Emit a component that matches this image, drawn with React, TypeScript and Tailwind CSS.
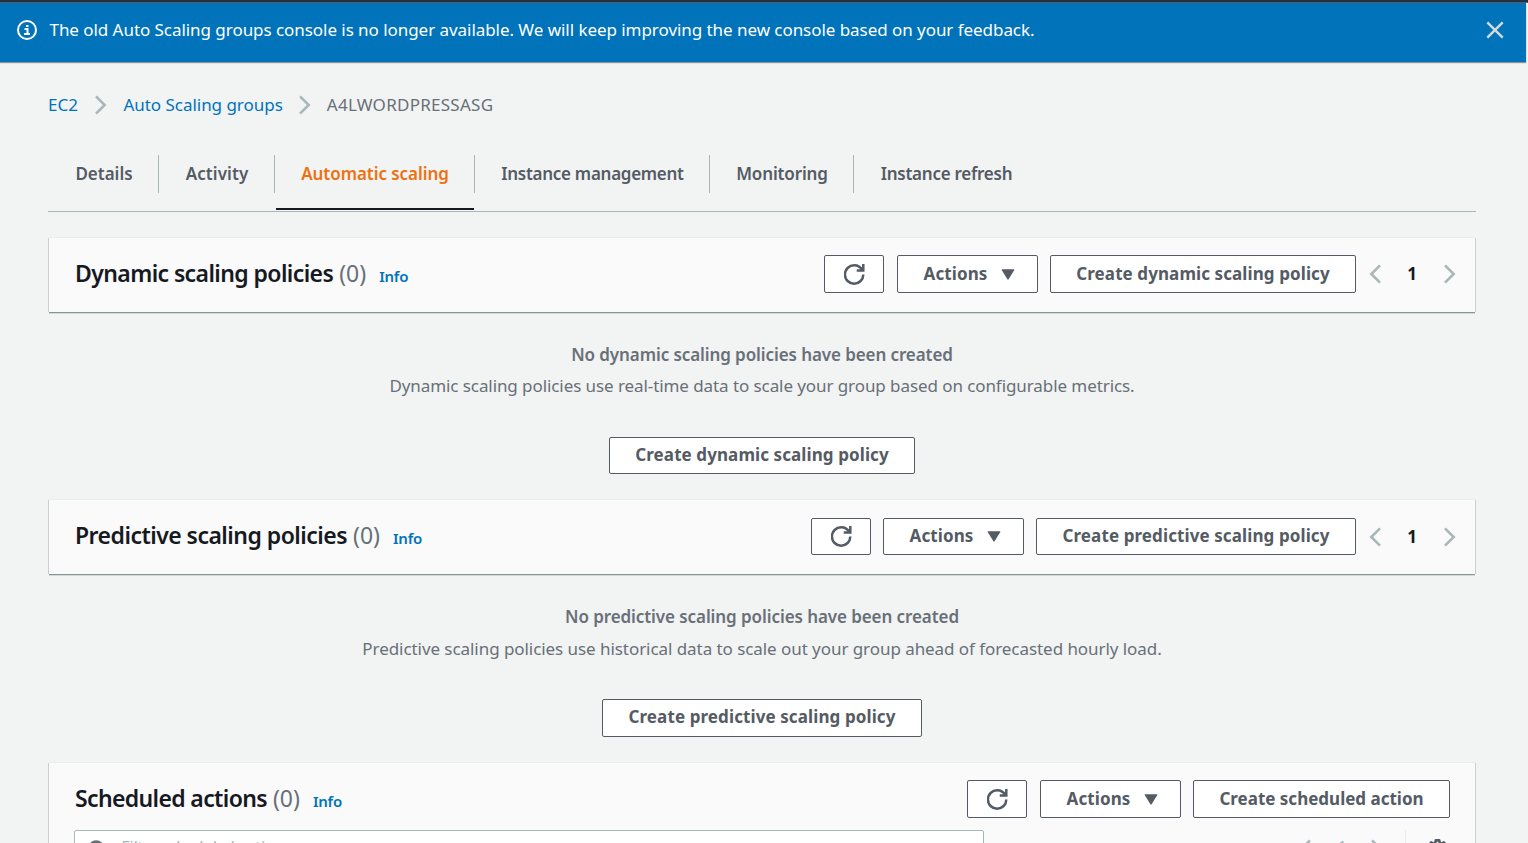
import type { ReactNode } from "react";

function RefreshIcon() {
  return (
    <svg viewBox="0 0 16 16" className="h-[21px] w-[21px]" fill="none" stroke="currentColor" strokeWidth="1.9">
      <path d="M9.700 5h5V0" />
      <path d="M14.700 8c0 3.87-3.13 7-7 7s-7-3.13-7-7 3.13-7 7-7c2.79 0 5.2 1.63 6.33 4" />
    </svg>
  );
}

function Chevron({ left = false }: { left?: boolean }) {
  return (
    <svg viewBox="0 0 12 20" className="h-5 w-3 shrink-0 text-[#aab7b8]" fill="none" stroke="currentColor" strokeWidth="2.6">
      <path d={left ? "M11 1.3 2.3 10l8.7 8.7" : "M1 1.3 9.7 10 1 18.7"} />
    </svg>
  );
}

function Button({ children, className }: { children: ReactNode; className: string }) {
  return (
    <button
      type="button"
      className={`flex shrink-0 items-center justify-center whitespace-nowrap rounded-[2px] border border-[#545b64] bg-white text-[17px] leading-6 font-bold text-[#545b64] ${className}`}
    >
      {children}
    </button>
  );
}

function ActionsButton({ className }: { className: string }) {
  return (
    <Button className={`w-[141px] gap-[14px] pl-[4px] tracking-[0.1px] ${className}`}>
      <span>Actions</span>
      <svg viewBox="0 0 14 11" className="h-[11px] w-[14px]" fill="currentColor">
        <path d="M1.2.3h11.6q.9 0 .5.8L7.6 10.2q-.6.8-1.2 0L.7 1.1Q.3.3 1.2.3Z" />
      </svg>
    </Button>
  );
}

function Title({ children, className = "leading-[36px] tracking-[-0.6px]" }: { children: string; className?: string }) {
  return (
    <h2 className={`flex h-[38px] flex-1 items-baseline whitespace-nowrap text-[23px] text-[#16191f] ${className}`}>
      <span className="font-semibold">{children}</span>
      <span className="ml-[6px] tracking-normal text-[#687078]">(0)</span>
      <a className="ml-[13px] text-[15px] font-semibold tracking-[-0.2px] text-[#0073bb]">Info</a>
    </h2>
  );
}

function Pager() {
  return (
    <div className="ml-[13px] flex h-[38px] items-center text-[17px] font-bold text-[#16191f]">
      <Chevron left />
      <span className="w-[63px] pr-px text-center">1</span>
      <Chevron />
    </div>
  );
}

function Card({ children, className }: { children: ReactNode; className: string }) {
  return (
    <section
      className={`mx-px shrink-0 bg-[#fafafa] pl-[26px] shadow-[0_-1px_0_#eaeded,-1px_0_0_#c9d0d1,1px_0_0_#c9d0d1,0_1px_0_#879596,0_2px_0_#d3d8d9] ${className}`}
    >
      {children}
    </section>
  );
}

function SearchIcon() {
  return (
    <svg viewBox="0 0 16 16" className="h-[21px] w-[21px] shrink-0 text-[#687078]" fill="none" stroke="currentColor" strokeWidth="2">
      <circle cx="7" cy="7" r="5" />
      <path d="m15 15-4.5-4.5" />
    </svg>
  );
}

function GearIcon() {
  return (
    <svg viewBox="0 0 16 16" className="h-[21px] w-[21px] text-[#545b64]" fill="none" stroke="currentColor" strokeWidth="2" strokeLinejoin="round">
      <path d="M6.7 1h2.6l.4 1.9 1.2.6 1.9-.9 1.6 2.1-1.3 1.5.2 1.3 1.7.9-.6 2.4-1.9.1-.9 1.1.4 1.9-2.5 1L8.300 13.400H7.700l-1.200 1.500-2.500-1 .4-1.900-.9-1.100-1.900-.1L1 8.400l1.700-.9.2-1.300L1.600 4.700l1.600-2.100 1.900.9 1.200-.6Z" />
      <circle cx="8" cy="8" r="2" />
    </svg>
  );
}

const tabs = [
  { label: "Details", box: "w-[111px] pl-[2px] border-r" },
  { label: "Activity", box: "w-[116px] border-r pl-px tracking-[0.08px]" },
  { label: "Automatic scaling", box: "w-[200px] border-r pl-px tracking-[-0.06px] text-[#ec7211]", active: true },
  { label: "Instance management", box: "w-[235px] border-r pl-px tracking-[-0.28px]" },
  { label: "Monitoring", box: "w-[144px] border-r pl-px tracking-[-0.13px]" },
  { label: "Instance refresh", box: "w-[185px] tracking-[-0.25px]" },
];

export default function App() {
  return (
    <div className="flex h-[843px] flex-col overflow-hidden bg-[#f2f3f3] font-['Noto_Sans',sans-serif] text-[17px] leading-6">
      <div className="h-[3px] shrink-0 border-b border-[#545b64] bg-[#232f3e]" />
      <header className="mr-[2px] flex h-[59px] shrink-0 items-start bg-[#0073bb] pt-4 pr-[22px] pl-4 text-white shadow-[0_1px_1px_#879596]">
        <svg viewBox="0 0 22 22" className="h-[22px] w-[22px]" fill="none" stroke="currentColor" strokeWidth="2">
          <circle cx="11" cy="11" r="9" />
          <path d="M8.500 10h3v5M8 15h6M10 7h2.500" />
        </svg>
        <p className="ml-[11.500px] flex-1 leading-[22px] tracking-[-0.05px]">
          The old Auto Scaling groups console is no longer available. We will keep improving the new console based on your feedback.
        </p>
        <svg viewBox="0 0 18 18" className="mt-[2px] h-[18px] w-[18px] text-[#d5dbdb]" fill="none" stroke="currentColor" strokeWidth="2.4">
          <path d="m1.300 1.300 15.400 15.400M16.700 1.300 1.300 16.700" />
        </svg>
      </header>

      <main className="ml-12 flex w-[1428px] flex-col">
        <nav className="mt-[31px] flex h-6 shrink-0 items-center text-[#0073bb]">
          <a>EC2</a>
          <span className="mr-[16.500px] ml-[17px] flex"><Chevron /></span>
          <a className="tracking-[-0.03px]">Auto Scaling groups</a>
          <span className="mx-4 flex"><Chevron /></span>
          <span className="tracking-[0.26px] text-[#687078]">A4LWORDPRESSASG</span>
        </nav>

        <div className="mt-[38px] flex h-[57px] shrink-0 border-b border-[#aab7b8] font-semibold text-[#545b64]">
          {tabs.map((tab) => (
            <div key={tab.label} className={`relative flex h-[38px] items-center justify-center border-[#aab7b8] whitespace-nowrap ${tab.box}`}>
              {tab.label}
              {tab.active && <span className="absolute top-[53px] right-0 left-px h-[2px] bg-[#16191f]" />}
            </div>
          ))}
        </div>

        <Card className="mt-[26px] flex h-[74px] pt-[17px] pr-[19px]">
          <Title>Dynamic scaling policies</Title>
          <Button className="mr-[13px] h-[38px] w-[60px]"><RefreshIcon /></Button>
          <ActionsButton className="mr-3 h-[38px]" />
          <Button className="h-[38px] w-[306px] tracking-[0.09px]">Create dynamic scaling policy</Button>
          <Pager />
        </Card>
        <div className="flex h-[188px] shrink-0 flex-col items-center pt-[31px] text-[#687078]">
          <p className="font-semibold tracking-[-0.09px]">No dynamic scaling policies have been created</p>
          <p className="mt-[7px] mb-[39px] tracking-[-0.08px]">
            Dynamic scaling policies use real-time data to scale your group based on configurable metrics.
          </p>
          <Button className="h-[37px] w-[306px] pb-[2px] tracking-[0.09px]">Create dynamic scaling policy</Button>
        </div>

        <Card className="flex h-[74px] pt-[18px] pr-[19px]">
          <Title className="leading-[34px] tracking-[-0.53px]">Predictive scaling policies</Title>
          <Button className="mr-3 h-[37px] w-[60px]"><RefreshIcon /></Button>
          <ActionsButton className="mr-3 h-[37px] pb-px" />
          <Button className="h-[37px] w-[320px] pb-[2px] tracking-[0.1px]">Create predictive scaling policy</Button>
          <Pager />
        </Card>
        <div className="flex h-[189px] shrink-0 flex-col items-center pt-[31px] text-[#687078]">
          <p className="font-semibold tracking-[-0.08px]">No predictive scaling policies have been created</p>
          <p className="mt-2 mb-[38px] tracking-[-0.06px]">
            Predictive scaling policies use historical data to scale out your group ahead of forecasted hourly load.
          </p>
          <Button className="h-[38px] w-[320px] pb-[2px] tracking-[0.1px]">Create predictive scaling policy</Button>
        </div>

        <Card className="h-[140px] pt-[17px] pr-[25px]">
          <div className="flex">
            <Title className="leading-[36px] tracking-[-0.64px]">Scheduled actions</Title>
            <Button className="mr-[13px] h-[38px] w-[60px]"><RefreshIcon /></Button>
            <ActionsButton className="mr-3 h-[38px]" />
            <Button className="h-[38px] w-[257px]">Create scheduled action</Button>
          </div>
          <div className="mt-3 -ml-px flex h-[42px]">
            <div className="flex w-[910px] items-start rounded-[2px] border border-[#aab7b8] bg-white pt-[4px] pl-[12px]">
              <span className="mt-1 flex"><SearchIcon /></span>
              <span className="ml-3 tracking-[-0.3px] text-[#aab7b8] italic">Filter scheduled actions</span>
            </div>
            <div className="ml-auto flex items-start text-[#aab7b8]">
              <span className="mt-[9px] flex"><Chevron left /></span>
              <span className="mt-[5px] w-[60px] pl-[2px] text-center">1</span>
              <span className="mt-[9px] mr-[22px] flex"><Chevron /></span>
              <span className="h-full border-l border-[#eaeded]" />
              <span className="mt-[9px] mr-[2px] ml-[21px] flex"><GearIcon /></span>
            </div>
          </div>
        </Card>
      </main>
    </div>
  );
}
